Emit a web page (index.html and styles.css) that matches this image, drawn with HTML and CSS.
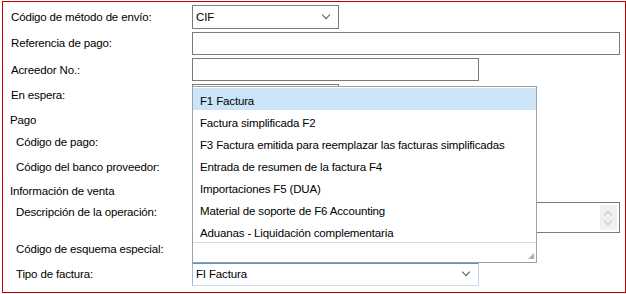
FILE: index.html
```html
<!DOCTYPE html>
<html lang="es">
<head>
  <meta charset="UTF-8">
  <title>Factura - envío</title>
  <link rel="stylesheet" href="styles.css">
</head>
<body>
  <div class="panel">
    <div class="row r1">
      <label class="lbl">Código de método de envío:</label>
      <div class="select w-small"><span class="sel-text">CIF</span><span class="chev"></span></div>
    </div>
    <div class="row r2">
      <label class="lbl">Referencia de pago:</label>
      <div class="input w-full"></div>
    </div>
    <div class="row r3">
      <label class="lbl">Acreedor No.:</label>
      <div class="input w-mid"></div>
    </div>
    <div class="row r4">
      <label class="lbl">En espera:</label>
      <div class="select w-small"></div>
    </div>
    <div class="row r5">
      <span class="group">Pago</span>
    </div>
    <div class="row r6">
      <label class="lbl sub">Código de pago:</label>
      <div class="input w-mid"></div>
    </div>
    <div class="row r7">
      <label class="lbl sub">Código del banco proveedor:</label>
      <div class="input w-mid"></div>
    </div>
    <div class="row r8">
      <span class="group">Información de venta</span>
    </div>
    <div class="row r9">
      <label class="lbl sub">Descripción de la operación:</label>
      <div class="textarea w-full">
        <div class="scroll">
          <span class="arr up"></span>
          <span class="arr down"></span>
        </div>
      </div>
    </div>
    <div class="row r10">
      <label class="lbl sub">Código de esquema especial:</label>
      <div class="input w-mid"></div>
    </div>
    <div class="row r11">
      <label class="lbl sub">Tipo de factura:</label>
      <div class="select w-mid focus"><span class="sel-text">FI Factura</span><span class="chev"></span></div>
    </div>

    <!-- lista desplegable abierta -->
    <div class="dropdown">
      <ul class="items">
        <li class="item selected">F1 Factura</li>
        <li class="item">Factura simplificada F2</li>
        <li class="item">F3 Factura emitida para reemplazar las facturas simplificadas</li>
        <li class="item">Entrada de resumen de la factura F4</li>
        <li class="item">Importaciones F5 (DUA)</li>
        <li class="item">Material de soporte de F6 Accounting</li>
        <li class="item">Aduanas - Liquidación complementaria</li>
      </ul>
      <div class="footer"><span class="grip"></span></div>
    </div>
  </div>
</body>
</html>
```

FILE: styles.css
```css
/* Reset y estilos básicos */
body {
  font-family: "Liberation Sans", Arial, sans-serif;
  font-size: 11.5px;
  letter-spacing: -0.15px;
  color: #000;
  margin: 0;
  padding: 0;
  background-color: #fff;
}
.panel {
  position: relative;
  box-sizing: border-box;
  width: 624px;
  height: 292px;
  margin: 1px 0 0 2px;
  border: 1px solid #c00000;
  padding-top: 2px;
}
/* Filas del formulario */
.row {
  display: flex;
  align-items: center;
}
.lbl {
  width: 189px;
  padding-left: 8px;
  box-sizing: border-box;
  flex-shrink: 0;
  white-space: nowrap;
}
.lbl.sub {
  padding-left: 13px;
}
.group {
  padding-left: 7px;
}
.r1 { height: 26px; }
.r2 { height: 26px; }
.r3 { height: 27px; }
.r4 { height: 26px; align-items: flex-start; }
.r4 .lbl { padding-top: 6px; }
.r4 .select { margin-top: 1px; }
.r5 { height: 21px; }
.r6 { height: 24px; }
.r7 { height: 26px; }
.r8 { height: 22px; }
.r9 { height: 33px; align-items: flex-start; }
.r9 .lbl { padding-top: 4px; }
.r10 { height: 27px; }
.r11 { height: 24px; }
/* Campos */
.input, .select, .textarea {
  box-sizing: border-box;
  border: 1px solid #7a7a7a;
  background: #fff;
  height: 23px;
  flex-shrink: 0;
}
.select {
  height: 24px;
  display: flex;
  align-items: center;
  justify-content: space-between;
  padding: 0 9px 0 3px;
}
.select.focus {
  height: 23px;
  border-color: #4f95d6 #b9d6f0 #c8def2 #8fbde6;
}
.w-small { width: 147px; }
.w-mid { width: 287px; }
.w-full { width: 428px; }
.textarea {
  height: 31px;
  position: relative;
}
.scroll {
  position: absolute;
  right: 2px;
  top: 2px;
  width: 17px;
  height: 25px;
  background: #f0f0f0;
}
.arr {
  position: absolute;
  left: 5px;
  width: 5px;
  height: 5px;
  border-left: 1px solid #c2c2c2;
  border-top: 1px solid #c2c2c2;
}
.arr.up { top: 7px; transform: rotate(45deg); }
.arr.down { top: 13px; transform: rotate(225deg); }
.chev {
  width: 5px;
  height: 5px;
  border-right: 1px solid #555;
  border-bottom: 1px solid #555;
  transform: rotate(45deg);
  margin-top: -4px;
}
/* Lista desplegable */
.dropdown {
  position: absolute;
  left: 189px;
  top: 84px;
  width: 345px;
  height: 177px;
  box-sizing: border-box;
  border: 1px solid #a0a0a0;
  background: #fff;
}
.items {
  list-style: none;
  margin: 0;
  padding: 1px 0 0;
}
.item {
  box-sizing: border-box;
  height: 22px;
  line-height: 22px;
  padding: 2px 0 0 7px;
  white-space: nowrap;
}
.item.selected {
  background-color: #cce4f7;
}
.footer {
  position: relative;
  border-top: 1px solid #dadada;
  height: 18px;
}
.grip {
  position: absolute;
  right: 2px;
  bottom: 2px;
  width: 6px;
  height: 6px;
  background:
    radial-gradient(circle, #b0b0b0 1px, transparent 1px) 0 0 / 2px 2px;
  clip-path: polygon(100% 0, 100% 100%, 0 100%);
}
```
